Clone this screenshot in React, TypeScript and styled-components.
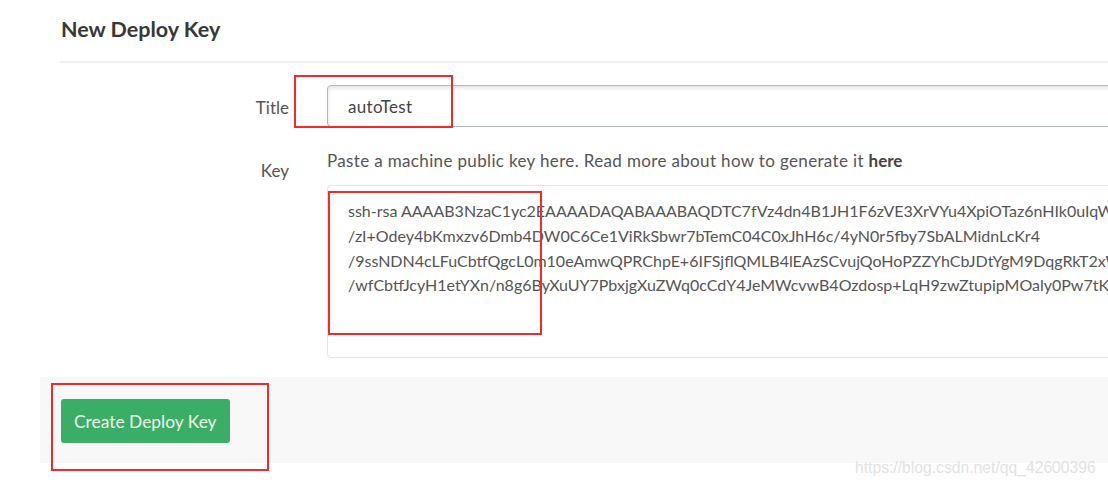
import React from "react";
import styled, { createGlobalStyle } from "styled-components";

const Global = createGlobalStyle`
  html, body { margin: 0; padding: 0; background: #fff; }
  body { overflow: hidden; width: 1108px; height: 486px; }
  * { box-sizing: border-box; }
`;

const Page = styled.div`
  position: relative;
  width: 1108px;
  height: 486px;
  overflow: hidden;
  padding: 0 0 0 60px;
  font-family: Lato, "Liberation Sans", sans-serif;
  color: #555;
`;

const Header = styled.h3`
  margin: 0;
  width: 1100px;
  padding: 16px 0 19px 1px;
  font-size: 21.5px;
  line-height: 26px;
  font-weight: 700;
  color: #383838;
  border-bottom: 2px solid #f1f1f1;
`;

const Form = styled.div`
  display: grid;
  grid-template-columns: 267px 900px;
  row-gap: 24px;
  padding-top: 22px;
`;

const Label = styled.label<{ $offset: number }>`
  text-align: right;
  padding-right: 38px;
  padding-top: ${(p) => p.$offset}px;
  font-size: 17px;
  line-height: 20px;
  color: #555;
`;

const Field = styled.div`
  display: flex;
  flex-direction: column;
  gap: 14px;
`;

const TextInput = styled.input`
  height: 42px;
  width: 900px;
  padding: 0 20px;
  font-family: inherit;
  font-size: 17px;
  letter-spacing: 0.3px;
  color: #444;
  border: 1px solid #aeb7c3;
  border-radius: 4px;
  box-shadow: inset 0 2px 4px rgba(0, 0, 0, 0.12);
  outline: none;
`;

const Help = styled.div`
  font-size: 17px;
  letter-spacing: 0.35px;
  line-height: 20px;
  color: #555;
  b { font-weight: 700; color: #444; letter-spacing: 0; }
`;

const KeyArea = styled.textarea`
  height: 173px;
  width: 900px;
  padding: 13px 20px;
  font-family: inherit;
  font-size: 16px;
  line-height: 24.8px;
  color: #555;
  border: 1px solid #e6e6e8;
  border-radius: 4px;
  resize: none;
  overflow: hidden;
  white-space: pre;
  outline: none;
`;

const Footer = styled.div`
  margin: 19px 0 0 -20px;
  width: 1100px;
  height: 86px;
  padding: 22px 21px;
  background: #f8f8f8;
`;

const Button = styled.button`
  height: 44px;
  padding: 0 13px;
  font-family: inherit;
  font-size: 17.4px;
  color: #eef7e8;
  background: #3aae66;
  border: none;
  border-radius: 3px;
`;

const Mark = styled.div<{ $x: number; $y: number; $w: number; $h: number }>`
  position: absolute;
  left: ${(p) => p.$x}px;
  top: ${(p) => p.$y}px;
  width: ${(p) => p.$w}px;
  height: ${(p) => p.$h}px;
  border: 2px solid #f42a2a;
  pointer-events: none;
`;

const Watermark = styled.div`
  position: absolute;
  left: 855px;
  top: 458px;
  font-family: "Liberation Sans", Arial, sans-serif;
  font-size: 15.7px;
  line-height: 20px;
  color: #e2e2e2;
  white-space: nowrap;
`;

const keyText = [
  "ssh-rsa AAAAB3NzaC1yc2EAAAADAQABAAABAQDTC7fVz4dn4B1JH1F6zVE3XrVYu4XpiOTaz6nHIk0uIqW3xB",
  "/zI+Odey4bKmxzv6Dmb4DW0C6Ce1ViRkSbwr7bTemC04C0xJhH6c/4yN0r5fby7SbALMidnLcKr4",
  "/9ssNDN4cLFuCbtfQgcL0m10eAmwQPRChpE+6IFSjflQMLB4lEAzSCvujQoHoPZZYhCbJDtYgM9DqgRkT2xW8pQ",
  "/wfCbtfJcyH1etYXn/n8g6ByXuUY7PbxjgXuZWq0cCdY4JeMWcvwB4Ozdosp+LqH9zwZtupipMOaly0Pw7tK3nR",
].join("\n");

export default function App() {
  return (
    <>
      <Global />
      <Page>
        <Header>New Deploy Key</Header>
        <Form>
          <Label $offset={13}>Title</Label>
          <TextInput defaultValue="autoTest" readOnly />
          <Label $offset={10}>Key</Label>
          <Field>
            <Help>
              Paste a machine public key here. Read more about how to generate it <b>here</b>
            </Help>
            <KeyArea value={keyText} readOnly />
          </Field>
        </Form>
        <Footer>
          <Button>Create Deploy Key</Button>
        </Footer>
        <Mark $x={294} $y={75} $w={159} $h={53} />
        <Mark $x={328} $y={191} $w={214} $h={144} />
        <Mark $x={51} $y={383} $w={218} $h={88} />
        <Watermark>https://blog.csdn.net/qq_42600396</Watermark>
      </Page>
    </>
  );
}
